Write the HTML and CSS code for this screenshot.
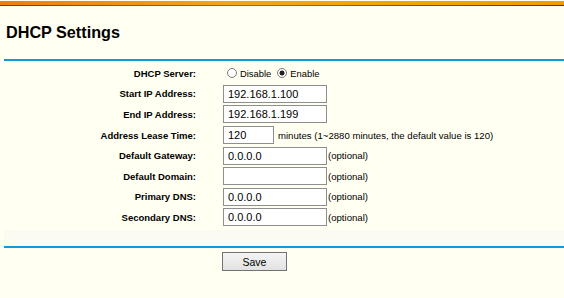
FILE: index.html
```html
<!DOCTYPE html>
<html lang="en">
<head>
    <meta charset="UTF-8">
    <title>DHCP Settings</title>
    <link rel="stylesheet" href="styles.css">
</head>
<body>
    <div class="top-bar"></div>

    <div class="page">
        <h1 class="title">DHCP Settings</h1>
        <div class="line"></div>

        <div class="form">
            <div class="row">
                <div class="label">DHCP Server:</div>
                <div class="field">
                    <label class="radio"><span class="dot"></span>Disable</label>
                    <label class="radio"><span class="dot checked"></span>Enable</label>
                </div>
            </div>
            <div class="row">
                <div class="label">Start IP Address:</div>
                <div class="field"><input class="text" type="text" value="192.168.1.100"></div>
            </div>
            <div class="row">
                <div class="label">End IP Address:</div>
                <div class="field"><input class="text" type="text" value="192.168.1.199"></div>
            </div>
            <div class="row">
                <div class="label">Address Lease Time:</div>
                <div class="field">
                    <input class="text short" type="text" value="120">
                    <span class="hint gap">minutes (1~2880 minutes, the default value is 120)</span>
                </div>
            </div>
            <div class="row">
                <div class="label">Default Gateway:</div>
                <div class="field"><input class="text" type="text" value="0.0.0.0"><span class="hint">(optional)</span></div>
            </div>
            <div class="row">
                <div class="label">Default Domain:</div>
                <div class="field"><input class="text" type="text" value=""><span class="hint">(optional)</span></div>
            </div>
            <div class="row">
                <div class="label">Primary DNS:</div>
                <div class="field"><input class="text" type="text" value="0.0.0.0"><span class="hint">(optional)</span></div>
            </div>
            <div class="row">
                <div class="label">Secondary DNS:</div>
                <div class="field"><input class="text" type="text" value="0.0.0.0"><span class="hint">(optional)</span></div>
            </div>
        </div>

        <div class="band"></div>
        <div class="line"></div>

        <div class="actions">
            <button class="save">Save</button>
        </div>
    </div>
</body>
</html>
```

FILE: styles.css
```css
/* Router admin page - DHCP settings */
body {
    margin: 0;
    background-color: #fffff2;
    font-family: Arial, "Liberation Sans", sans-serif;
    color: #000;
}

.top-bar {
    height: 5px;
    background: linear-gradient(to right, #2a4f8f 0%, #3f7fc0 45%, #1d3f86 100%);
}

.top-bar::after {
    content: "";
    display: block;
    height: 4px;
    margin-top: 1px;
    background: linear-gradient(to right, #f07c12 0%, #f4a21e 40%, #f2a400 75%, #f29a00 100%);
}

.page {
    padding-left: 4px;
}

.title {
    margin: 0;
    padding: 17px 0 0 2px;
    height: 36px;
    font-size: 16.2px;
    font-weight: bold;
    line-height: 19px;
}

.line {
    height: 2px;
    background-color: #0f9bd7;
}

.form {
    padding-top: 2px;
}

.row {
    display: flex;
    align-items: center;
    height: 20.6px;
}

.label {
    width: 192px;
    text-align: right;
    font-size: 9.5px;
    font-weight: bold;
}

.field {
    display: flex;
    align-items: center;
    margin-left: 27px;
}

.text {
    box-sizing: border-box;
    width: 104px;
    height: 18px;
    margin: 0;
    padding: 0 4px;
    border: 1px solid #8e8e8e;
    background-color: #fff;
    font-family: Arial, "Liberation Sans", sans-serif;
    font-size: 11px;
    color: #000;
}

.text.short {
    width: 51px;
}

.hint {
    font-size: 9.6px;
    margin-left: 1px;
}

.hint.gap {
    margin-left: 4px;
}

.radio {
    display: flex;
    align-items: center;
    font-size: 9.4px;
    margin-left: 4px;
    margin-right: 2px;
}

.dot {
    box-sizing: border-box;
    width: 10px;
    height: 10px;
    border: 1px solid #7a7a7a;
    border-radius: 50%;
    background-color: #fff;
    margin-right: 3px;
}

.dot.checked {
    background: radial-gradient(circle, #222 0, #222 2.2px, #fff 2.8px);
}

.band {
    height: 16px;
    margin-top: 2px;
    background-color: #fbfbf1;
}

.actions {
    padding: 4px 0 0 218px;
}

.save {
    width: 65px;
    height: 19px;
    padding: 0;
    border: 1px solid #727272;
    background: linear-gradient(to bottom, #f4f4f4 0%, #e2e2e2 100%);
    font-family: Arial, "Liberation Sans", sans-serif;
    font-size: 10.5px;
    color: #000;
}
```
